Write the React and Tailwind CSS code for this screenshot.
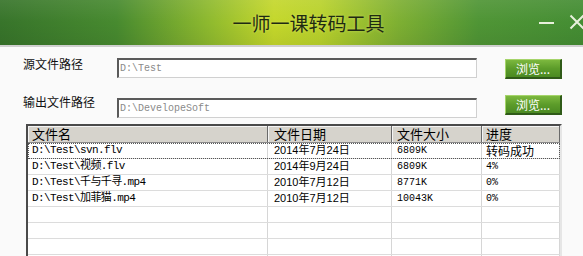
import React from 'react';

const files = [
  { name: 'D:\\Test\\svn.flv', date: '2014年7月24日', size: '6809K', progress: '转码成功' },
  { name: 'D:\\Test\\视频.flv', date: '2014年9月24日', size: '6809K', progress: '4%' },
  { name: 'D:\\Test\\千与千寻.mp4', date: '2010年7月12日', size: '8771K', progress: '0%' },
  { name: 'D:\\Test\\加菲猫.mp4', date: '2010年7月12日', size: '10043K', progress: '0%' },
  null,
  null,
  null,
  null,
];

const cjk = { fontFamily: '"Noto Sans CJK SC", "Liberation Sans", sans-serif' };

const PathRow = ({ label, value, labelOffset, buttonOffset, top }) => {
  return (
    <div className={`flex items-start ${top}`}>
      <div className={`w-[94px] text-[12px] leading-[16px] text-[#111] ${labelOffset}`}>{label}</div>
      <div className="w-[360px] h-[20px] bg-white border-t-2 border-l-2 border-[#5a5a5a] border-r border-b border-r-[#d0d0d0] border-b-[#d0d0d0] flex items-center pl-[1px] font-['Liberation_Mono',monospace] text-[10px] text-[#8a8a8a]">
        {value}
      </div>
      <button
        type="button"
        className={`ml-[28px] w-[57px] h-[20px] bg-gradient-to-b from-[#7cb83e] via-[#5c9c2a] to-[#4b8a22] border-r-2 border-b-2 border-[#2f5a18] border-t border-l border-t-[#a5d46a] border-l-[#a5d46a] text-white text-[12px] leading-none flex items-center justify-center ${buttonOffset}`}
      >
        浏览...
      </button>
    </div>
  );
};

const App = () => {
  return (
    <div className="w-[583px] h-[256px] overflow-hidden bg-[#fafafa]" style={cjk}>
      {/* title bar */}
      <div className="relative h-[45px] bg-[linear-gradient(90deg,#37742a_0%,#478a2f_20%,#8fba2e_36%,#c4d72b_47%,#b9d22c_55%,#7fb032_68%,#4f9535_82%,#448d33_100%)] flex items-center justify-center">
        <div className="absolute inset-0 bg-[linear-gradient(180deg,rgba(255,255,255,0.08)_0%,rgba(0,0,0,0)_50%,rgba(0,0,0,0.06)_100%)]" />
        <span className="relative text-[19px] text-[#1e2a12] ml-[34px] mt-[1px] [text-shadow:0_0_3px_rgba(230,240,120,0.6)]">一师一课转码工具</span>
        <div className="absolute -right-[2px] top-[14px] flex items-center gap-[15px]">
          <div className="w-[15px] h-[2px] bg-[#e8f0dc] mt-[2px]" />
          <svg width="16" height="16" viewBox="0 0 16 16">
            <path d="M1.5 1.5 L14.5 14.5 M14.5 1.5 L1.5 14.5" stroke="#e8f0dc" strokeWidth="2" fill="none" />
          </svg>
        </div>
      </div>
      <div className="h-[2px] bg-[#cfcfcf]" />

      <div className="pl-[23px]">
        <PathRow label="源文件路径" value="D:\Test" top="mt-[11px]" labelOffset="-mt-[2px]" buttonOffset="mt-[1px]" />
        <PathRow label="输出文件路径" value="D:\DevelopeSoft" top="mt-[19px]" labelOffset="-mt-[4px]" buttonOffset="-mt-[3px]" />
      </div>

      {/* file list */}
      <div className="ml-[26px] mt-[6px] w-[536px] border-t-2 border-l-2 border-[#4a4a4a] border-r-2 border-r-[#e6e6e6] bg-white">
        <div className="flex h-[17px] bg-[#d6d3cc] border-b border-[#8a8a8a] text-[13px] leading-[16px] text-black">
          <div className="w-[240px] pl-[4px] border-r border-[#6a6a6a] shadow-[inset_1px_1px_0_#f4f4f4]">文件名</div>
          <div className="w-[124px] pl-[6px] border-r border-[#6a6a6a] shadow-[inset_1px_1px_0_#f4f4f4]">文件日期</div>
          <div className="w-[90px] pl-[5px] border-r border-[#6a6a6a] shadow-[inset_1px_1px_0_#f4f4f4]">文件大小</div>
          <div className="w-[78px] pl-[4px] border-r border-[#6a6a6a] shadow-[inset_1px_1px_0_#f4f4f4]">进度</div>
        </div>
        {files.map((f, i) => (
          <div
            key={i}
            className={`flex h-[16px] border-b border-[#dcdcdc] text-black ${i === 0 ? 'outline-1 outline-dotted outline-[#555] -outline-offset-1' : ''}`}
          >
            <div className="w-[240px] pl-[4px] border-r border-[#d6d6d6] font-['Liberation_Mono','Noto_Sans_CJK_SC',monospace] text-[11px] tracking-[-0.6px] leading-[15px] whitespace-nowrap overflow-hidden">
              {f ? f.name : ''}
            </div>
            <div className="w-[124px] pl-[6px] border-r border-[#d6d6d6] font-['Liberation_Sans','Noto_Sans_CJK_SC',sans-serif] text-[11px] leading-[15px] whitespace-nowrap">
              {f ? f.date : ''}
            </div>
            <div className="w-[90px] pl-[5px] border-r border-[#d6d6d6] font-['Liberation_Mono',monospace] text-[10px] leading-[15px]">
              {f ? f.size : ''}
            </div>
            <div className={`w-[78px] pl-[4px] border-r border-[#d6d6d6] leading-[15px] whitespace-nowrap ${f && f.progress.includes('%') ? "font-['Liberation_Mono',monospace] text-[10px]" : 'text-[12px]'}`}>
              {f ? f.progress : ''}
            </div>
          </div>
        ))}
      </div>
    </div>
  );
};

export default App;
